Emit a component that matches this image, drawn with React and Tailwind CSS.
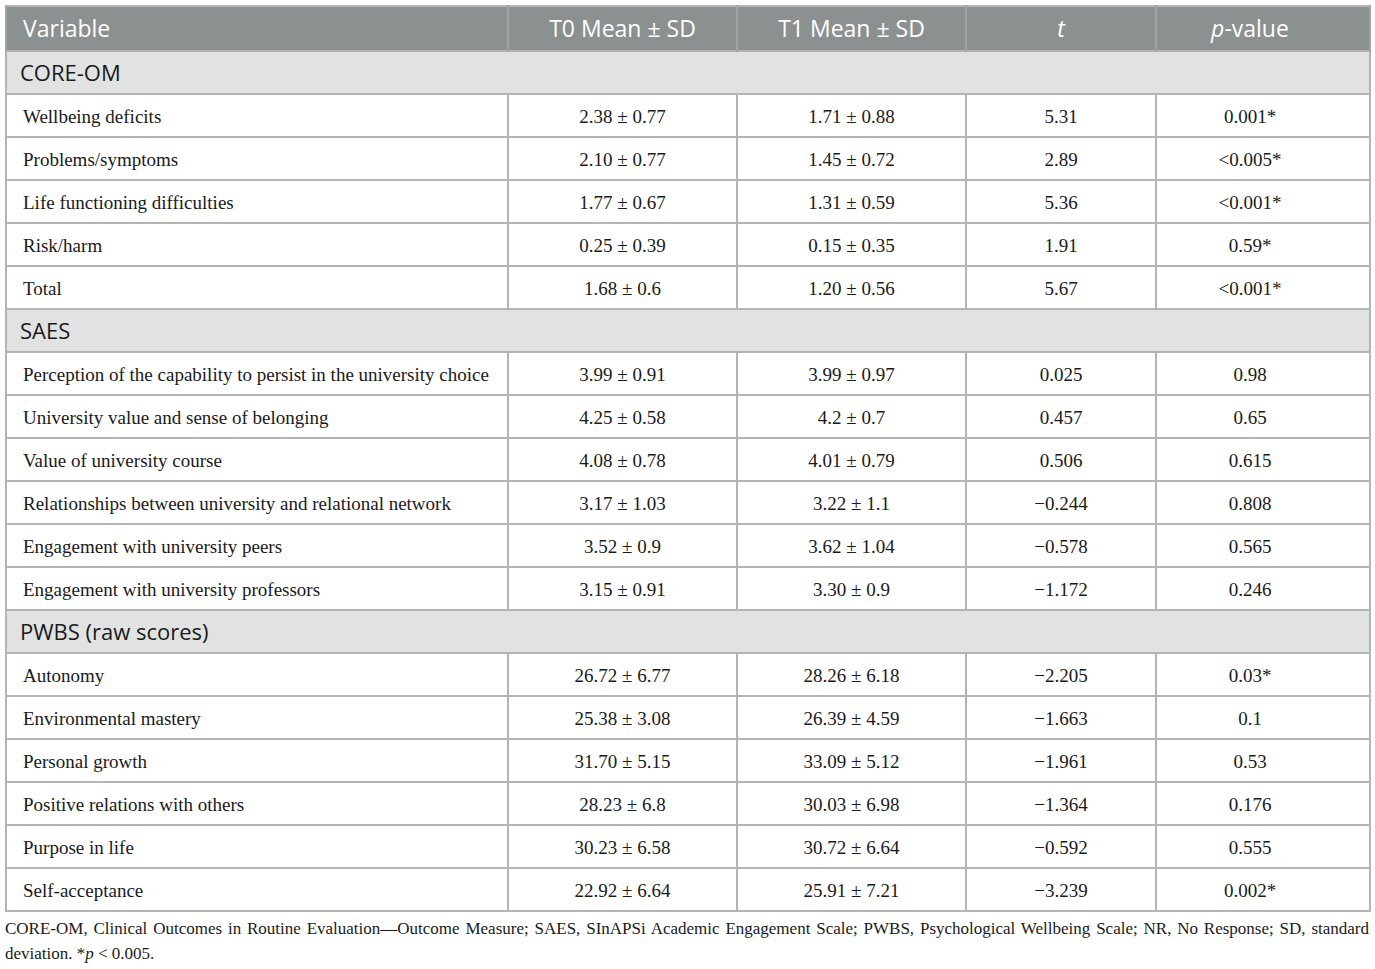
import React from "react";

const sections = [
  {
    title: "CORE-OM",
    rows: [
      ["Wellbeing deficits", "2.38 ± 0.77", "1.71 ± 0.88", "5.31", "0.001*"],
      ["Problems/symptoms", "2.10 ± 0.77", "1.45 ± 0.72", "2.89", "<0.005*"],
      ["Life functioning difficulties", "1.77 ± 0.67", "1.31 ± 0.59", "5.36", "<0.001*"],
      ["Risk/harm", "0.25 ± 0.39", "0.15 ± 0.35", "1.91", "0.59*"],
      ["Total", "1.68 ± 0.6", "1.20 ± 0.56", "5.67", "<0.001*"],
    ],
  },
  {
    title: "SAES",
    rows: [
      ["Perception of the capability to persist in the university choice", "3.99 ± 0.91", "3.99 ± 0.97", "0.025", "0.98"],
      ["University value and sense of belonging", "4.25 ± 0.58", "4.2 ± 0.7", "0.457", "0.65"],
      ["Value of university course", "4.08 ± 0.78", "4.01 ± 0.79", "0.506", "0.615"],
      ["Relationships between university and relational network", "3.17 ± 1.03", "3.22 ± 1.1", "−0.244", "0.808"],
      ["Engagement with university peers", "3.52 ± 0.9", "3.62 ± 1.04", "−0.578", "0.565"],
      ["Engagement with university professors", "3.15 ± 0.91", "3.30 ± 0.9", "−1.172", "0.246"],
    ],
  },
  {
    title: "PWBS (raw scores)",
    rows: [
      ["Autonomy", "26.72 ± 6.77", "28.26 ± 6.18", "−2.205", "0.03*"],
      ["Environmental mastery", "25.38 ± 3.08", "26.39 ± 4.59", "−1.663", "0.1"],
      ["Personal growth", "31.70 ± 5.15", "33.09 ± 5.12", "−1.961", "0.53"],
      ["Positive relations with others", "28.23 ± 6.8", "30.03 ± 6.98", "−1.364", "0.176"],
      ["Purpose in life", "30.23 ± 6.58", "30.72 ± 6.64", "−0.592", "0.555"],
      ["Self-acceptance", "22.92 ± 6.64", "25.91 ± 7.21", "−3.239", "0.002*"],
    ],
  },
];

const sans = "font-['Open_Sans',sans-serif]";
const serif = "font-['Liberation_Serif',serif]";

export default function App() {
  return (
    <div className="min-h-screen bg-white px-[5px] pt-[5px]">
      <table className="w-[1364px] table-fixed border-collapse border-2 border-[#b4b4b4]">
        <colgroup>
          <col className="w-[502px]" />
          <col className="w-[229px]" />
          <col className="w-[229px]" />
          <col className="w-[190px]" />
          <col className="w-[214px]" />
        </colgroup>
        <thead>
          <tr className={`h-[45px] bg-[#8b9091] text-white text-[23px] ${sans}`}>
            <th className="border-x-2 border-[#9ea3a4] px-4 text-left font-normal">Variable</th>
            <th className="border-x-2 border-[#9ea3a4] font-normal">T0 Mean ± SD</th>
            <th className="border-x-2 border-[#9ea3a4] font-normal">T1 Mean ± SD</th>
            <th className="border-x-2 border-[#9ea3a4] font-normal italic">t</th>
            <th className="border-x-2 border-[#9ea3a4] pr-[26px] font-normal">
              <span className="italic">p</span>-value
            </th>
          </tr>
        </thead>
        <tbody>
          {sections.map((s) => (
            <React.Fragment key={s.title}>
              <tr className="h-[43px] bg-[#e1e3e2]">
                <td colSpan={5} className={`border-2 border-[#b4b4b4] px-[13px] text-[22px] text-[#1a1a1a] ${sans}`}>
                  {s.title}
                </td>
              </tr>
              {s.rows.map((r) => (
                <tr key={r[0]} className={`h-[43px] text-[19px] text-[#1a1a1a] ${serif}`}>
                  <td className="border-2 border-[#b4b4b4] px-4 pt-[3px]">{r[0]}</td>
                  <td className="border-2 border-[#b4b4b4] pt-[3px] text-center">{r[1]}</td>
                  <td className="border-2 border-[#b4b4b4] pt-[3px] text-center">{r[2]}</td>
                  <td className="border-2 border-[#b4b4b4] pt-[3px] text-center">{r[3]}</td>
                  <td className="border-2 border-[#b4b4b4] pt-[3px] pr-[26px] text-center">{r[4]}</td>
                </tr>
              ))}
            </React.Fragment>
          ))}
        </tbody>
      </table>
      <p className={`w-[1364px] pt-[4px] text-[17px] leading-[25px] text-[#1a1a1a] ${serif}`}>
        <span className="block whitespace-nowrap text-justify [text-align-last:justify]">
          CORE-OM, Clinical Outcomes in Routine Evaluation—Outcome Measure; SAES, SInAPSi Academic Engagement Scale; PWBS,
          Psychological Wellbeing Scale; NR, No Response; SD, standard
        </span>
        <span className="block">
          deviation. *<span className="italic">p</span> &lt; 0.005.
        </span>
      </p>
    </div>
  );
}
